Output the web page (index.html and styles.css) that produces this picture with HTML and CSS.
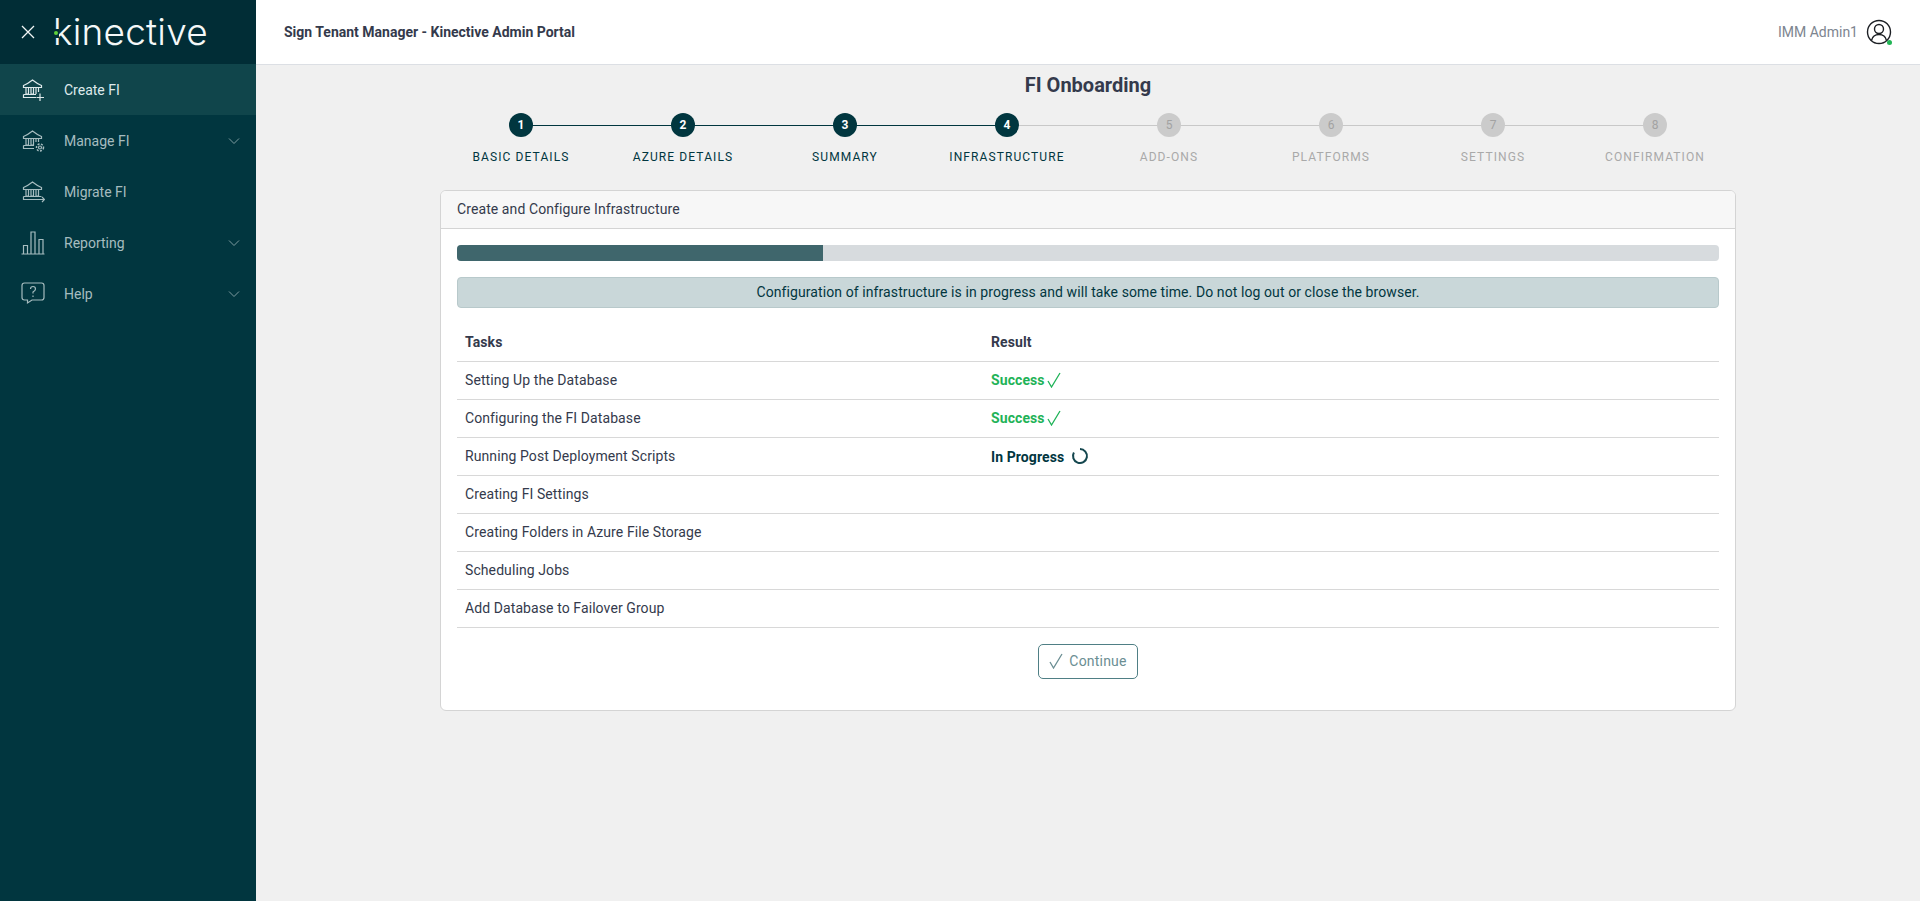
FILE: index.html
```html
<!DOCTYPE html>
<html lang="en">
<head>
    <meta charset="UTF-8">
    <title>Sign Tenant Manager - Kinective Admin Portal</title>
    <link rel="stylesheet" href="styles.css">
</head>
<body>
<div class="sidebar">
    <div class="brand">
        <svg class="close-icon" width="16" height="16" viewBox="0 0 16 16"><path d="M2 2 L14 14 M14 2 L2 14"/></svg>
        <div class="logo">kinective<span class="logo-gap"></span><span class="logo-dot"></span></div>
    </div>
    <ul class="menu">
        <li class="active">
            <svg class="menu-icon" width="24" height="24" viewBox="0 0 24 24"><path d="M2.500 7.500 C6 6 9 4 11.500 2 C14 4 17 6 20.500 7.500 V9.500 H2.500 Z M5 9.500 V16 H7.500 V9.500 M10 9.500 V16 H12.500 V9.500 M15 9.500 V16 M17.500 9.500 V14 M2.500 16.500 H15 M2.500 16.500 V19.500 H15 M19 15.500 V23 M15.500 19.500 H23"/></svg>
            <span>Create FI</span>
        </li>
        <li>
            <svg class="menu-icon" width="24" height="24" viewBox="0 0 24 24"><path d="M2.500 7.500 C6 6 9 4 11.500 2 C14 4 17 6 20.500 7.500 V9.500 H2.500 Z M5 9.500 V16 H7.500 V9.500 M10 9.500 V16 H12.500 V9.500 M15 9.500 V13 M17.500 9.500 V13 M2.500 16.500 H13 M2.500 16.500 V19.500 H13"/><circle cx="19" cy="18.500" r="1.500"/><circle class="gear" cx="19" cy="18.500" r="3.500"/></svg>
            <span>Manage FI</span>
            <svg class="chevron" width="12" height="8" viewBox="0 0 12 8"><path d="M1 1.500 L6 6.500 L11 1.500"/></svg>
        </li>
        <li>
            <svg class="menu-icon" width="24" height="24" viewBox="0 0 24 24"><path d="M2.500 7.500 C6 6 9 4 11.500 2 C14 4 17 6 20.500 7.500 V9.500 H2.500 Z M5 9.500 V16 H7.500 V9.500 M10 9.500 V16 H12.500 V9.500 M15 9.500 V16 H17.500 V9.500 M2.500 16.500 H20.500 M2.500 16.500 V19.500 H23.500 M21 17 L23.500 19.500 L21 22"/></svg>
            <span>Migrate FI</span>
        </li>
        <li>
            <svg class="menu-icon" width="24" height="24" viewBox="0 0 24 24"><path d="M0.500 23 H23.500 M2.500 22.500 V14.500 H6.500 V22.500 M10 22.500 V1 H14 V22.500 M18 22.500 V8.500 H22 V22.500"/></svg>
            <span>Reporting</span>
            <svg class="chevron" width="12" height="8" viewBox="0 0 12 8"><path d="M1 1.500 L6 6.500 L11 1.500"/></svg>
        </li>
        <li>
            <svg class="menu-icon" width="24" height="24" viewBox="0 0 24 24"><path d="M3.500 1 H20.500 Q23 1 23 3.500 V15.500 Q23 18 20.500 18 H11 L6.500 21 V18 H3.500 Q1 18 1 15.500 V3.500 Q1 1 3.500 1 Z M9.500 7 Q9.500 4.500 12 4.500 Q14.500 4.500 14.500 7 Q14.500 8.500 12 10 V11.500 M12 13.500 V15"/></svg>
            <span>Help</span>
            <svg class="chevron" width="12" height="8" viewBox="0 0 12 8"><path d="M1 1.500 L6 6.500 L11 1.500"/></svg>
        </li>
    </ul>
</div>

<div class="main">
    <div class="topbar">
        <div class="topbar-title">Sign Tenant Manager - Kinective Admin Portal</div>
        <div class="user">
            <span>IMM Admin1</span>
            <span class="avatar">
                <svg width="26" height="26" viewBox="0 0 26 26"><circle cx="13" cy="13" r="11.500"/><circle cx="13" cy="10" r="4.500"/><path d="M5.500 21.500 C6.500 17 9.500 15.500 13 15.500 C16.500 15.500 19.500 17 20.500 21.500"/></svg>
                <i class="online"></i>
            </span>
        </div>
    </div>

    <div class="content">
        <h1>FI Onboarding</h1>

        <div class="steps">
            <div class="step done"><b>1</b><span>Basic Details</span></div>
            <div class="step done"><b>2</b><span>Azure Details</span></div>
            <div class="step done"><b>3</b><span>Summary</span></div>
            <div class="step current"><b>4</b><span>Infrastructure</span></div>
            <div class="step"><b>5</b><span>Add-Ons</span></div>
            <div class="step"><b>6</b><span>Platforms</span></div>
            <div class="step"><b>7</b><span>Settings</span></div>
            <div class="step"><b>8</b><span>Confirmation</span></div>
        </div>

        <div class="card">
            <div class="card-header">Create and Configure Infrastructure</div>
            <div class="card-body">
                <div class="progress"><div class="progress-bar" style="width: 29%"></div></div>
                <div class="alert">Configuration of infrastructure is in progress and will take some time. Do not log out or close the browser.</div>

                <table class="tasks">
                    <tr><th>Tasks</th><th>Result</th></tr>
                    <tr>
                        <td>Setting Up the Database</td>
                        <td class="success">Success<svg width="14" height="16" viewBox="0 0 14 16"><path d="M1 9 L4.500 15 L13 1"/></svg></td>
                    </tr>
                    <tr>
                        <td>Configuring the FI Database</td>
                        <td class="success">Success<svg width="14" height="16" viewBox="0 0 14 16"><path d="M1 9 L4.500 15 L13 1"/></svg></td>
                    </tr>
                    <tr>
                        <td>Running Post Deployment Scripts</td>
                        <td class="running">In Progress<svg width="18" height="18" viewBox="0 0 18 18"><path d="M9 2 A7 7 0 1 1 2.900 5.500"/></svg></td>
                    </tr>
                    <tr><td>Creating FI Settings</td><td></td></tr>
                    <tr><td>Creating Folders in Azure File Storage</td><td></td></tr>
                    <tr><td>Scheduling Jobs</td><td></td></tr>
                    <tr><td>Add Database to Failover Group</td><td></td></tr>
                </table>

                <div class="actions">
                    <button class="btn">
                        <svg width="14" height="16" viewBox="0 0 14 16"><path d="M1 9 L4.500 15 L13 1"/></svg>
                        Continue
                    </button>
                </div>
            </div>
        </div>
    </div>
</div>
</body>
</html>
```

FILE: styles.css
```css
* {
    margin: 0;
    padding: 0;
    box-sizing: border-box;
}

ul {
    list-style: none;
}

body {
    display: flex;
    height: 100vh;
    overflow: hidden;
    background-color: #f0f0f0;
    font-family: Roboto, "Liberation Sans", sans-serif;
    font-size: 14px;
    color: #343a4c;
}

/* sidebar */
.sidebar {
    width: 256px;
    flex-shrink: 0;
    background-color: #01363f;
}

.brand {
    height: 64px;
    display: flex;
    align-items: center;
    padding-left: 20px;
    background-color: #012d36;
}

.close-icon path {
    fill: none;
    stroke: #f2f6f6;
    stroke-width: 1.3;
}

.logo {
    position: relative;
    margin-left: 17px;
    font-family: Inter, Roboto, sans-serif;
    font-weight: 300;
    font-size: 37px;
    line-height: 40px;
    letter-spacing: 0.2px;
    color: #f4f8f8;
}

.logo-gap {
    position: absolute;
    left: 0;
    top: 17px;
    width: 6px;
    height: 9px;
    background-color: #012d36;
}

.logo-dot {
    position: absolute;
    left: 1px;
    top: 19px;
    width: 4px;
    height: 4px;
    border-radius: 50%;
    background-color: #5fd03c;
}

.menu li {
    display: flex;
    align-items: center;
    height: 51px;
    padding: 0 16px 0 21px;
    color: #a6bcbf;
}

.menu li.active {
    background-color: #10454b;
    color: #dfeaec;
}

.menu li span {
    flex: 1;
    margin-left: 19px;
}

.menu-icon path,
.menu-icon circle {
    fill: none;
    stroke: #a6bcbf;
    stroke-width: 1.2;
}

.menu-icon .gear {
    stroke-width: 1.5;
    stroke-dasharray: 2 1.400;
}

.active .menu-icon path {
    stroke: #dfeaec;
}

.chevron path {
    fill: none;
    stroke: #7f9ca0;
    stroke-width: 1;
}

/* top bar */
.main {
    flex: 1;
    min-width: 0;
}

.topbar {
    height: 65px;
    display: flex;
    align-items: center;
    justify-content: space-between;
    padding: 0 28px 1px 28px;
    background-color: #fff;
    border-bottom: 1px solid #dcdfe4;
}

.topbar-title {
    font-weight: 700;
}

.user {
    display: flex;
    align-items: center;
    gap: 8px;
    color: #7d8590;
}

.avatar {
    position: relative;
    display: block;
    width: 26px;
    height: 26px;
}

.avatar circle,
.avatar path {
    fill: none;
    stroke: #1c1f24;
    stroke-width: 1.4;
}

.online {
    position: absolute;
    right: 0;
    bottom: 0;
    width: 5px;
    height: 5px;
    border-radius: 50%;
    background-color: #22b556;
}

/* content */
.content {
    width: 1296px;
    margin: 0 auto;
}

h1 {
    margin-top: 8px;
    font-size: 20px;
    line-height: 24px;
    font-weight: 700;
    text-align: center;
}

.steps {
    display: grid;
    grid-template-columns: repeat(8, 1fr);
    margin-top: 16px;
}

.step {
    position: relative;
    display: flex;
    flex-direction: column;
    align-items: center;
    gap: 13px;
    color: #01363f;
}

.step:not(:last-child)::after {
    content: "";
    position: absolute;
    left: 50%;
    top: 12px;
    width: 100%;
    height: 1px;
    background-color: #c8c8c8;
}

.step.done::after {
    background-color: #01363f;
}

.step b {
    position: relative;
    z-index: 1;
    width: 24px;
    height: 24px;
    border-radius: 50%;
    background-color: #01363f;
    color: #fff;
    font-size: 12px;
    line-height: 24px;
    text-align: center;
}

.step span {
    font-size: 12px;
    line-height: 14px;
    letter-spacing: 1.1px;
    text-transform: uppercase;
}

.step:not(.done):not(.current) {
    color: #a9a9a9;
}

.step:not(.done):not(.current) b {
    background-color: #cbcbcb;
    color: #a2a2a2;
    font-weight: 400;
}

/* card */
.card {
    margin-top: 26px;
    height: 521px;
    background-color: #fff;
    border: 1px solid #d4d4d4;
    border-radius: 6px;
    overflow: hidden;
    letter-spacing: 0.09px;
}

.card-header {
    height: 38px;
    padding: 0 16px;
    line-height: 37px;
    background-color: #f7f7f7;
    border-bottom: 1px solid #d4d4d4;
}

.card-body {
    padding: 16px;
}

.progress {
    height: 16px;
    border-radius: 4px;
    background-color: #d7dbde;
    overflow: hidden;
}

.progress-bar {
    height: 100%;
    background-color: #3f666c;
}

.alert {
    margin-top: 16px;
    height: 31px;
    line-height: 29px;
    text-align: center;
    color: #01363f;
    background-color: #c9d7d9;
    border: 1px solid #b8c9cb;
    border-radius: 4px;
}

.tasks {
    width: 100%;
    margin-top: 16px;
    border-collapse: collapse;
}

.tasks th,
.tasks td {
    height: 38px;
    padding: 0 8px;
    text-align: left;
    border-bottom: 1px solid #d8d8d8;
}

.tasks th {
    height: 37px;
}

.tasks th:first-child {
    width: 526px;
}

.success {
    color: #1fb358;
    font-weight: 700;
}

.success svg {
    margin-left: 2px;
    vertical-align: -3px;
}

.success path,
.btn path {
    fill: none;
    stroke: currentColor;
    stroke-width: 1.3;
}

.running {
    color: #01363f;
    font-weight: 700;
}

.running svg {
    margin-left: 7px;
    vertical-align: -3px;
}

.running path {
    fill: none;
    stroke: #15474f;
    stroke-width: 2;
}

.actions {
    display: flex;
    justify-content: center;
    margin-top: 16px;
}

.btn {
    display: flex;
    align-items: center;
    justify-content: center;
    gap: 6px;
    width: 100px;
    height: 35px;
    background-color: #fff;
    border: 1px solid #4f7f85;
    border-radius: 5px;
    font-family: inherit;
    font-size: 14px;
    letter-spacing: 0.2px;
    color: #6b8e93;
}
```
